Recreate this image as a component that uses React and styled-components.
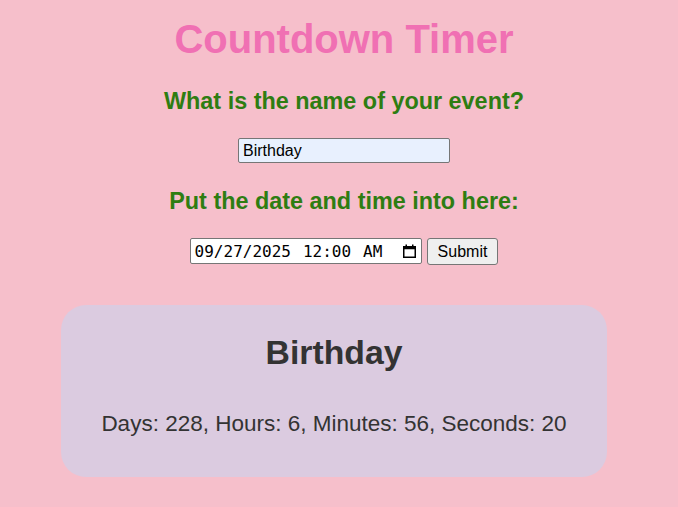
import React, { useState } from 'react'
import styled, { createGlobalStyle } from 'styled-components'

const GlobalStyle = createGlobalStyle`
  html, body {
    margin: 0;
    padding: 0;
    background: #f6bfcb;
  }
  body {
    font-family: 'Liberation Sans', Arial, sans-serif;
    font-size: 20px;
  }
`

const Page = styled.div`
  display: flex;
  flex-direction: column;
  padding-top: 16px;
`

const FormSection = styled.form`
  display: flex;
  flex-direction: column;
  align-items: center;
  padding-left: 10px;
`

const Title = styled.h1`
  margin: 0;
  font-size: 40px;
  line-height: 46px;
  font-weight: bold;
  color: #f070b3;
`

const Label = styled.h3`
  margin: ${(p) => p.$top}px 0 23px;
  font-size: 23.4px;
  line-height: 27px;
  font-weight: bold;
  color: #2e7d12;
`

const TextInput = styled.input`
  box-sizing: border-box;
  width: 212px;
  height: 25px;
  padding: 0 4px;
  border: 1px solid #767676;
  border-radius: 2px;
  background: #e8f0fe;
  font-family: 'Liberation Sans', Arial, sans-serif;
  font-size: 16px;
  color: #000;
`

const Row = styled.div`
  display: flex;
  align-items: flex-start;
  gap: 5px;
`

// datetime-local field drawn by hand so the text reads like the reference
const DateField = styled.div`
  box-sizing: border-box;
  display: flex;
  align-items: center;
  width: 232px;
  height: 26px;
  padding: 0 5px 0 4px;
  border: 1px solid #767676;
  border-radius: 2px;
  background: #fff;
  font-family: 'DejaVu Sans Mono', monospace;
  font-size: 16px;
  color: #000;
  cursor: text;
`

const Segment = styled.span`
  margin-right: ${(p) => p.$gap || 0}px;
  white-space: pre;
`

const PickerIcon = styled.svg`
  margin-left: auto;
  width: 13px;
  height: 14px;
`

const Button = styled.button`
  box-sizing: border-box;
  height: 27px;
  padding: 0 10px;
  border: 1px solid #767676;
  border-radius: 3px;
  background: #efefef;
  font-family: 'Liberation Sans', Arial, sans-serif;
  font-size: 16px;
  color: #000;
`

const CardSection = styled.div`
  padding: 40px 0 0 61px;
`

const Card = styled.div`
  box-sizing: border-box;
  width: 546px;
  padding: 28px 0 40px;
  border-radius: 25px;
  background: #dbcbe0;
  color: #333;
  text-align: center;
  font-size: 22.5px;
`

const EventName = styled.h2`
  margin: 0 0 39px;
  font-size: 33.75px;
  line-height: 39px;
  font-weight: bold;
`

const Remaining = styled.p`
  margin: 0;
  line-height: 26px;
`

const CalendarIcon = () => (
  <PickerIcon viewBox="0 0 13 14">
    <rect x="0.75" y="2.75" width="11.5" height="10.5" fill="none" stroke="#000" strokeWidth="1.5" />
    <rect x="0.75" y="2.75" width="11.5" height="2.5" fill="#000" />
    <rect x="2.5" y="0.5" width="1.5" height="3" fill="#000" />
    <rect x="9" y="0.5" width="1.5" height="3" fill="#000" />
  </PickerIcon>
)

export default function App() {
  const [name, setName] = useState('Birthday')

  return (
    <Page>
      <GlobalStyle />
      <FormSection onSubmit={(e) => e.preventDefault()}>
        <Title>Countdown Timer</Title>
        <Label $top={26}>What is the name of your event?</Label>
        <TextInput value={name} onChange={(e) => setName(e.target.value)} />
        <Label $top={25}>Put the date and time into here:</Label>
        <Row>
          <DateField>
            <Segment $gap={12}>09/27/2025</Segment>
            <Segment $gap={12}>12:00</Segment>
            <Segment>AM</Segment>
            <CalendarIcon />
          </DateField>
          <Button type="submit">Submit</Button>
        </Row>
      </FormSection>
      <CardSection>
        <Card>
          <EventName>{name}</EventName>
          <Remaining>Days: 228, Hours: 6, Minutes: 56, Seconds: 20</Remaining>
        </Card>
      </CardSection>
    </Page>
  )
}
